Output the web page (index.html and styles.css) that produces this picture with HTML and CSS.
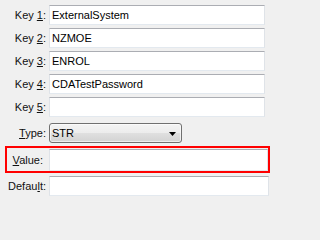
FILE: index.html
```html
<!DOCTYPE html>
<html>
<head>
<meta charset="utf-8">
<link rel="stylesheet" href="styles.css">
</head>
<body>
<div class="form">
  <div class="row"><span class="label">Key <u>1</u>:</span><div class="input">ExternalSystem</div></div>
  <div class="row"><span class="label">Key <u>2</u>:</span><div class="input">NZMOE</div></div>
  <div class="row"><span class="label">Key <u>3</u>:</span><div class="input">ENROL</div></div>
  <div class="row"><span class="label">Key <u>4</u>:</span><div class="input">CDATestPassword</div></div>
  <div class="row"><span class="label">Key <u>5</u>:</span><div class="input"></div></div>
  <div class="row type-row"><span class="label"><u>T</u>ype:</span>
    <div class="combo"><span class="combo-text">STR</span>
      <svg class="arrow" width="7" height="4" viewBox="0 0 7 4"><path d="M0 0H7L3.5 4Z" fill="#000"/></svg>
    </div>
  </div>
  <div class="highlight">
    <div class="row row-value"><span class="label label-value"><u>V</u>alue:</span><div class="input input-value"></div></div>
  </div>
  <div class="row row-default"><span class="label">Defau<u>l</u>t:</span><div class="input"></div></div>
</div>
</body>
</html>
```
FILE: styles.css
```css
html, body {
  margin: 0;
  padding: 0;
  background: #f0f0f0;
}
body {
  width: 271px;
  height: 200px;
  overflow: hidden;
  font-family: "Liberation Sans", Arial, sans-serif;
  font-size: 11px;
  color: #000;
}
.form {
  display: flex;
  flex-direction: column;
  gap: 3px;
  padding: 5px 6px 0 5px;
}
.row {
  display: flex;
  align-items: center;
  height: 20px;
}
.label {
  width: 41px;
  margin-right: 3px;
  text-align: right;
  white-space: nowrap;
  color: #111;
}
.label u {
  text-underline-offset: 1px;
}
.input {
  flex: 1;
  height: 20px;
  box-sizing: border-box;
  background: #fff;
  border: 1px solid #dfe3e8;
  border-top-color: #abadb3;
  border-bottom-color: #e3e9ef;
  padding: 0 3px 0 2px;
  line-height: 18px;
  white-space: nowrap;
  overflow: hidden;
}
.type-row {
  margin-top: 3px;
}
.combo {
  width: 133px;
  height: 20px;
  box-sizing: border-box;
  border: 1px solid #707070;
  border-radius: 3px;
  background: linear-gradient(#f4f4f4 0%, #ececec 50%, #e0e0e0 50%, #d2d2d2 100%);
  box-shadow: inset 0 0 0 1px rgba(255,255,255,0.6);
  display: flex;
  align-items: center;
  justify-content: space-between;
  padding: 0 5px 0 2px;
}
.combo-text {
  line-height: 18px;
}
.arrow {
  display: block;
  margin-top: 1px;
}
.highlight {
  border: 2px solid #ff0000;
  margin-right: -5px;
  padding: 1px 0 0 0;
  height: 22px;
  box-sizing: content-box;
}
.row-value {
  height: 22px;
}
.label-value {
  width: 36px;
  margin-right: 6px;
}
.input-value {
  height: 22px;
  line-height: 20px;
}
.row-default {
  margin-right: -4px;
}
```
